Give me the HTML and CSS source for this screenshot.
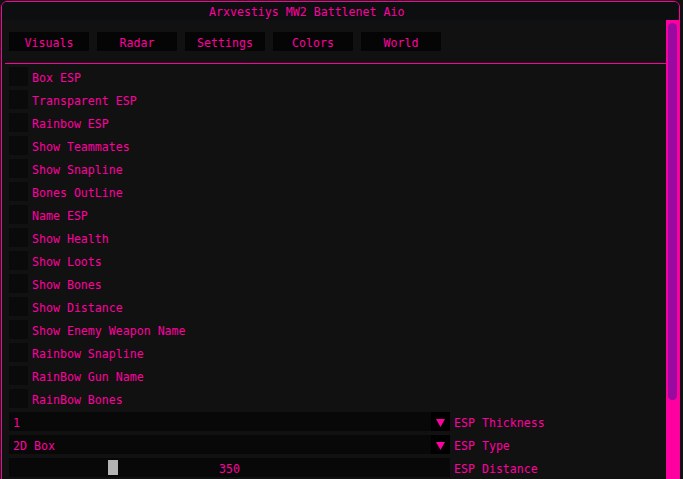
FILE: index.html
```html
<!DOCTYPE html>
<html>
<head>
<meta charset="utf-8">
<link rel="stylesheet" href="styles.css">
</head>
<body>
<div class="window">
  <div class="titlebar"><span class="title">Arxvestiys MW2 Battlenet Aio</span></div>
  <div class="frame">
    <div class="content">
      <div class="tabs">
        <div class="tab">Visuals</div>
        <div class="tab">Radar</div>
        <div class="tab">Settings</div>
        <div class="tab">Colors</div>
        <div class="tab">World</div>
      </div>
      <div class="separator"></div>
      <div class="rows">
        <div class="row"><span class="check"></span><span class="label">Box ESP</span></div>
        <div class="row"><span class="check"></span><span class="label">Transparent ESP</span></div>
        <div class="row"><span class="check"></span><span class="label">Rainbow ESP</span></div>
        <div class="row"><span class="check"></span><span class="label">Show Teammates</span></div>
        <div class="row"><span class="check"></span><span class="label">Show Snapline</span></div>
        <div class="row"><span class="check"></span><span class="label">Bones OutLine</span></div>
        <div class="row"><span class="check"></span><span class="label">Name ESP</span></div>
        <div class="row"><span class="check"></span><span class="label">Show Health</span></div>
        <div class="row"><span class="check"></span><span class="label">Show Loots</span></div>
        <div class="row"><span class="check"></span><span class="label">Show Bones</span></div>
        <div class="row"><span class="check"></span><span class="label">Show Distance</span></div>
        <div class="row"><span class="check"></span><span class="label">Show Enemy Weapon Name</span></div>
        <div class="row"><span class="check"></span><span class="label">Rainbow Snapline</span></div>
        <div class="row"><span class="check"></span><span class="label">RainBow Gun Name</span></div>
        <div class="row"><span class="check"></span><span class="label">RainBow Bones</span></div>
        <div class="row">
          <div class="combo"><span class="combo-value">1</span><span class="combo-arrow"><svg width="9" height="8" viewBox="0 0 9 8"><polygon points="0,0 9,0 4.5,8" fill="#ff00a0"/></svg></span></div>
          <span class="label">ESP Thickness</span>
        </div>
        <div class="row">
          <div class="combo"><span class="combo-value">2D Box</span><span class="combo-arrow"><svg width="9" height="8" viewBox="0 0 9 8"><polygon points="0,0 9,0 4.5,8" fill="#ff00a0"/></svg></span></div>
          <span class="label">ESP Type</span>
        </div>
        <div class="row">
          <div class="slider"><span class="slider-grab"></span><span class="slider-value">350</span></div>
          <span class="label">ESP Distance</span>
        </div>
      </div>
    </div>
    <div class="scrollbar"><div class="scroll-grab"></div></div>
  </div>
</div>
</body>
</html>
```
FILE: styles.css
```css
html, body {
  margin: 0;
  padding: 0;
  background: #111111;
  overflow: hidden;
}
body {
  font-family: "DejaVu Sans Mono", "Liberation Mono", monospace;
  font-size: 11.6px;
  color: #ff00a0;
  line-height: 19px;
}
.window {
  margin: 1px 0 0 1px;
  width: 677px;
  height: 520px;
  border: 1px solid #ff00a0;
  border-radius: 6px 6px 0 0;
  background: #111111;
  overflow: hidden;
}
.titlebar {
  height: 18px;
  background: #0c0e10;
  display: flex;
  align-items: center;
  padding-left: 207px;
  line-height: 18px;
}
.title {
  padding-top: 1px;
}
.frame {
  display: flex;
}
.content {
  flex: 1;
  padding: 12px 0 0 7px;
}
.tabs {
  display: flex;
  gap: 8px;
}
.tab {
  width: 80px;
  height: 19px;
  box-sizing: border-box;
  padding-top: 4px;
  line-height: 15px;
  background: #050505;
  text-align: center;
}
.separator {
  height: 1px;
  background: #ff00a0;
  margin: 12px 0 3px -4px;
}
.rows {
  display: flex;
  flex-direction: column;
  gap: 4px;
}
.row {
  display: flex;
  align-items: flex-start;
  height: 19px;
  gap: 4px;
}
.check {
  width: 19px;
  height: 19px;
  background: #0a0a0a;
}
.label,
.combo-value,
.slider-value {
  white-space: pre;
  padding-top: 4px;
  line-height: 15px;
  box-sizing: border-box;
  height: 19px;
}
.combo {
  width: 441px;
  height: 19px;
  background: #080808;
  display: flex;
}
.combo-value {
  flex: 1;
  padding-left: 4px;
}
.combo-arrow {
  width: 19px;
  height: 19px;
  background: #000000;
  display: flex;
  align-items: center;
  justify-content: center;
}
.combo-arrow svg {
  display: block;
  margin-top: 2px;
}
.slider {
  position: relative;
  width: 441px;
  height: 19px;
  background: #080808;
  text-align: center;
}
.slider-grab {
  position: absolute;
  left: 99px;
  top: 2px;
  width: 10px;
  height: 15px;
  background: #b4b4b4;
}
.slider-value {
  display: block;
}
.scrollbar {
  width: 13px;
  height: 500px;
  background: #ff00a0;
  padding-top: 3px;
  box-sizing: border-box;
}
.scroll-grab {
  width: 9px;
  margin-left: 2px;
  height: 377px;
  border-radius: 5px;
  background: #9a0aa0;
}
```
